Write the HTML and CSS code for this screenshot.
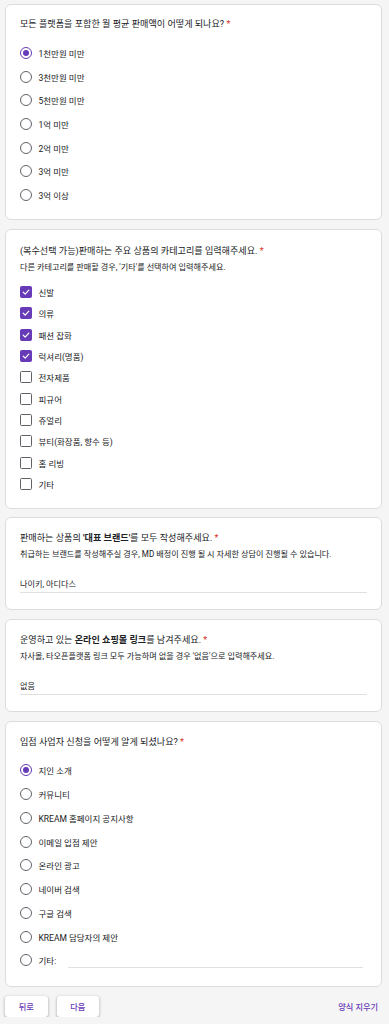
FILE: index.html
```html
<!DOCTYPE html>
<html lang="ko">
<head>
<meta charset="utf-8">
<title>입점 신청</title>
<link rel="stylesheet" href="styles.css">
</head>
<body>
<div class="page">
  <section class="card card-q1">
    <div class="title">모든 플랫폼을 포함한 월 평균 판매액이 어떻게 되나요? <span class="req">*</span></div>
    <div class="options radios">
      <div class="opt"><span class="radio checked"></span><span class="label">1천만원 미만</span></div>
      <div class="opt"><span class="radio"></span><span class="label">3천만원 미만</span></div>
      <div class="opt"><span class="radio"></span><span class="label">5천만원 미만</span></div>
      <div class="opt"><span class="radio"></span><span class="label">1억 미만</span></div>
      <div class="opt"><span class="radio"></span><span class="label">2억 미만</span></div>
      <div class="opt"><span class="radio"></span><span class="label">3억 미만</span></div>
      <div class="opt"><span class="radio"></span><span class="label">3억 이상</span></div>
    </div>
  </section>

  <section class="card card-q2">
    <div class="title">(복수선택 가능)판매하는 주요 상품의 카테고리를 입력해주세요. <span class="req">*</span></div>
    <div class="desc">다른 카테고리를 판매할 경우, '기타'를 선택하여 입력해주세요.</div>
    <div class="options checks">
      <div class="opt"><span class="check checked"><svg viewBox="0 0 12 12"><path d="M2.6 6.2 L5 8.5 L9.4 3.8" fill="none" stroke="#fff" stroke-width="1.5" stroke-linecap="round" stroke-linejoin="round"/></svg></span><span class="label">신발</span></div>
      <div class="opt"><span class="check checked"><svg viewBox="0 0 12 12"><path d="M2.6 6.2 L5 8.5 L9.4 3.8" fill="none" stroke="#fff" stroke-width="1.5" stroke-linecap="round" stroke-linejoin="round"/></svg></span><span class="label">의류</span></div>
      <div class="opt"><span class="check checked"><svg viewBox="0 0 12 12"><path d="M2.6 6.2 L5 8.5 L9.4 3.8" fill="none" stroke="#fff" stroke-width="1.5" stroke-linecap="round" stroke-linejoin="round"/></svg></span><span class="label">패션 잡화</span></div>
      <div class="opt"><span class="check checked"><svg viewBox="0 0 12 12"><path d="M2.6 6.2 L5 8.5 L9.4 3.8" fill="none" stroke="#fff" stroke-width="1.5" stroke-linecap="round" stroke-linejoin="round"/></svg></span><span class="label">럭셔리(명품)</span></div>
      <div class="opt"><span class="check"></span><span class="label">전자제품</span></div>
      <div class="opt"><span class="check"></span><span class="label">피규어</span></div>
      <div class="opt"><span class="check"></span><span class="label">쥬얼리</span></div>
      <div class="opt"><span class="check"></span><span class="label">뷰티(화장품, 향수 등)</span></div>
      <div class="opt"><span class="check"></span><span class="label">홈 리빙</span></div>
      <div class="opt"><span class="check"></span><span class="label">기타</span></div>
    </div>
  </section>

  <section class="card card-text">
    <div class="title">판매하는 상품의 <b>'대표 브랜드'</b>를 모두 작성해주세요. <span class="req">*</span></div>
    <div class="desc">취급하는 브랜드를 작성해주실 경우, MD 배정이 진행 될 시 자세한 상담이 진행될 수 있습니다.</div>
    <div class="input">나이키, 아디다스</div>
  </section>

  <section class="card card-text">
    <div class="title">운영하고 있는 <b>온라인 쇼핑몰 링크</b>를 남겨주세요. <span class="req">*</span></div>
    <div class="desc">자사몰, 타오픈플랫폼 링크 모두 가능하며 없을 경우 '없음'으로 입력해주세요.</div>
    <div class="input">없음</div>
  </section>

  <section class="card card-q5">
    <div class="title">입점 사업자 신청을 어떻게 알게 되셨나요? <span class="req">*</span></div>
    <div class="options radios radios5">
      <div class="opt"><span class="radio checked"></span><span class="label">지인 소개</span></div>
      <div class="opt"><span class="radio"></span><span class="label">커뮤니티</span></div>
      <div class="opt"><span class="radio"></span><span class="label">KREAM 홈페이지 공지사항</span></div>
      <div class="opt"><span class="radio"></span><span class="label">이메일 입점 제안</span></div>
      <div class="opt"><span class="radio"></span><span class="label">온라인 광고</span></div>
      <div class="opt"><span class="radio"></span><span class="label">네이버 검색</span></div>
      <div class="opt"><span class="radio"></span><span class="label">구글 검색</span></div>
      <div class="opt"><span class="radio"></span><span class="label">KREAM 담당자의 제안</span></div>
      <div class="opt other"><span class="radio"></span><span class="label">기타:</span><span class="other-line"></span></div>
    </div>
  </section>

  <div class="nav">
    <button class="btn">뒤로</button>
    <button class="btn">다음</button>
    <span class="clear">양식 지우기</span>
  </div>
</div>
</body>
</html>
```

FILE: styles.css
```css
* { box-sizing: border-box; }

body {
  margin: 0;
  background: #f5f5f6;
  font-family: Roboto, "Noto Sans CJK KR", sans-serif;
  color: #202124;
}

.page {
  padding: 4px 7px 0 5px;
  display: flex;
  flex-direction: column;
  gap: 8.7px;
}

.card {
  background: #fff;
  border: 1px solid #dadce0;
  border-radius: 6px;
  padding: 0 14px;
}

.title {
  font-size: 9.1px;
  line-height: 12px;
  white-space: nowrap;
}

.title b { font-weight: 700; }

.req { color: #d93025; }

.desc {
  font-size: 8.15px;
  line-height: 12px;
  margin-top: 4px;
  white-space: nowrap;
}

.options { display: flex; flex-direction: column; }

.opt {
  display: flex;
  align-items: center;
  font-size: 8.5px;
}

.radios .opt { height: 23.7px; }
.checks .opt { height: 21.33px; }
.radios5 .opt { height: 23.75px; }

.label { margin-left: 6.5px; white-space: nowrap; }

.radio {
  width: 12px;
  height: 12px;
  flex: none;
  border: 1.3px solid #5f6368;
  border-radius: 50%;
  display: flex;
  align-items: center;
  justify-content: center;
}

.radio.checked { border-color: #673ab7; }

.radio.checked::after {
  content: "";
  width: 6px;
  height: 6px;
  border-radius: 50%;
  background: #673ab7;
}

.check {
  width: 12px;
  height: 12px;
  flex: none;
  border: 1.3px solid #5f6368;
  border-radius: 1.5px;
}

.check.checked {
  background: #673ab7;
  border-color: #673ab7;
  display: flex;
}

.check svg { width: 100%; height: 100%; }

/* card specific spacing */
.card-q1 { padding-top: 13px; padding-bottom: 12px; }
.card-q1 .options { margin-top: 11.15px; }

.card-q2 { padding-top: 15px; padding-bottom: 13px; }
.card-q2 .options { margin-top: 8.6px; }

.card-text { padding-top: 13.8px; padding-bottom: 16.3px; }
.card-text .input {
  margin-top: 18.3px;
  font-size: 8.15px;
  line-height: 12px;
  padding-bottom: 1.8px;
  border-bottom: 1px solid #e0e0e0;
}

.card-q5 { padding-top: 14.2px; padding-bottom: 13.6px; }
.card-q5 .options { margin-top: 10.4px; }

.other-line {
  flex: 1;
  align-self: flex-start;
  margin-top: 18.4px;
  margin-left: 12px;
  margin-right: 4px;
  height: 1px;
  background: #e0e0e0;
}

.nav {
  display: flex;
  align-items: center;
  gap: 9px;
  height: 21px;
}

.btn {
  font-family: Roboto, "Noto Sans CJK KR", sans-serif;
  font-size: 8.2px;
  font-weight: 500;
  color: #673ab7;
  background: #fff;
  border: none;
  border-radius: 3px;
  height: 21px;
  width: 42.5px;
  padding: 0;
  box-shadow: 0 1px 2px rgba(60, 64, 67, 0.3), 0 1px 3px 1px rgba(60, 64, 67, 0.15);
}

.clear {
  margin-left: auto;
  margin-right: 4px;
  font-size: 8.2px;
  font-weight: 500;
  color: #673ab7;
}
```
